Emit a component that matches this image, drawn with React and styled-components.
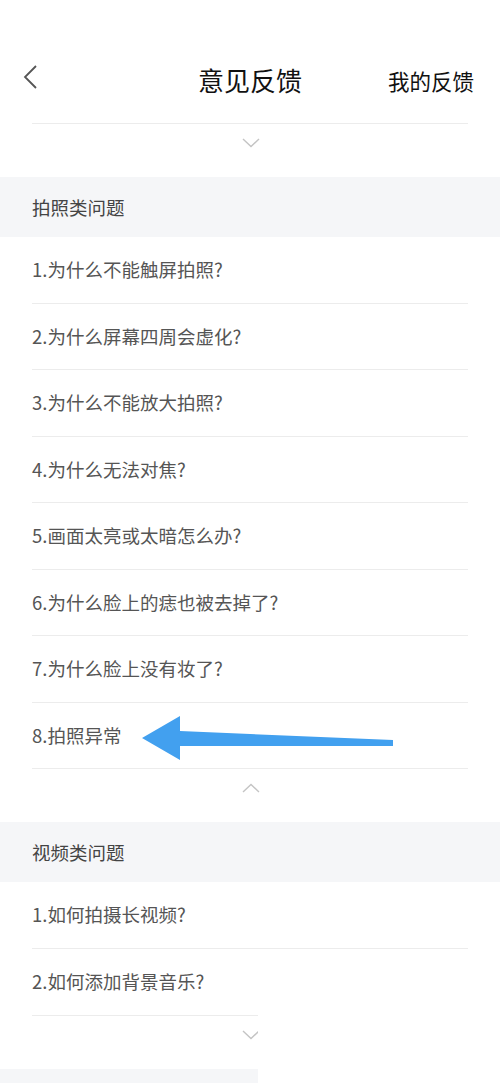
import styled, { createGlobalStyle } from 'styled-components';

const GlobalStyle = createGlobalStyle`
  html, body {
    margin: 0;
    padding: 0;
    background: #fff;
  }
  body {
    font-family: "Noto Sans CJK SC", "Noto Sans", sans-serif;
  }
`;

const photoQuestions = [
  '1.为什么不能触屏拍照?',
  '2.为什么屏幕四周会虚化?',
  '3.为什么不能放大拍照?',
  '4.为什么无法对焦?',
  '5.画面太亮或太暗怎么办?',
  '6.为什么脸上的痣也被去掉了?',
  '7.为什么脸上没有妆了?',
  '8.拍照异常',
];

const videoQuestions = ['1.如何拍摄长视频?', '2.如何添加背景音乐?'];

const Chevron = ({ up }) => (
  <svg width="18" height="10" viewBox="0 0 18 10">
    <polyline
      points={up ? '1,9 9,1.5 17,9' : '1,1 9,8.5 17,1'}
      fill="none"
      stroke="#c4c4c4"
      strokeWidth="1.4"
    />
  </svg>
);

const App = () => {
  return (
    <Page>
      <GlobalStyle />
      <Header>
        <BackBtn>
          <svg width="16" height="28" viewBox="0 0 16 28">
            <polyline points="14,2 3,13 14,24" fill="none" stroke="#555" strokeWidth="1.8" />
          </svg>
        </BackBtn>
        <Title>意见反馈</Title>
        <MyFeedback>我的反馈</MyFeedback>
      </Header>
      <Divider />
      <Toggle>
        <Chevron />
      </Toggle>

      <SectionHead>拍照类问题</SectionHead>
      {photoQuestions.map((q, i) => (
        <Row key={q}>
          {q}
          {i === photoQuestions.length - 1 && (
            <Arrow width="260" height="50" viewBox="0 0 260 50">
              <polygon
                points="0,22 38,0 38,15 251,24 251,30 38,30 38,44"
                fill="#42a0ef"
              />
            </Arrow>
          )}
        </Row>
      ))}
      <Toggle>
        <Chevron up />
      </Toggle>

      <SectionHead>视频类问题</SectionHead>
      {videoQuestions.map((q, i) => (
        <Row key={q} $last={i === videoQuestions.length - 1}>
          {q}
        </Row>
      ))}
      <Cropped>
        <Inner>
          <Divider />
          <Toggle>
            <Chevron />
          </Toggle>
          <GreyBar />
        </Inner>
      </Cropped>
    </Page>
  );
};

const Page = styled.div`
  width: 500px;
  background: #fff;
  overflow: hidden;
`;

const Header = styled.div`
  height: 123px;
  padding-top: 58px;
  box-sizing: border-box;
  display: flex;
  align-items: flex-start;
  position: relative;
`;

const BackBtn = styled.div`
  position: absolute;
  left: 22px;
  top: 64px;
`;

const Title = styled.div`
  flex: 1;
  text-align: center;
  font-size: 26px;
  color: #111;
  line-height: 44px;
`;

const MyFeedback = styled.div`
  position: absolute;
  right: 26px;
  top: 59px;
  font-size: 21.5px;
  color: #111;
  line-height: 44px;
`;

const Divider = styled.div`
  margin: 0 32px;
  height: 1px;
  background: #ececec;
`;

const Toggle = styled.div`
  height: 53px;
  display: flex;
  justify-content: center;
  padding-top: 14px;
  box-sizing: border-box;
  margin-left: 2px;
`;

const SectionHead = styled.div`
  height: 60px;
  background: #f5f6f8;
  display: flex;
  align-items: center;
  padding-left: 32px;
  font-size: 18.5px;
  color: #444;
`;

const Row = styled.div`
  position: relative;
  height: 66.5px;
  box-sizing: border-box;
  margin: 0 32px;
  border-bottom: ${(p) => (p.$last ? 'none' : '1px solid #ececec')};
  display: flex;
  align-items: center;
  font-size: 18.5px;
  color: #555;
  padding-bottom: 1px;
`;

const Arrow = styled.svg`
  position: absolute;
  left: 110px;
  top: 13px;
`;

const Cropped = styled.div`
  width: 258px;
  overflow: hidden;
`;

const Inner = styled.div`
  width: 500px;
`;

const GreyBar = styled.div`
  height: 20px;
  background: #f5f6f8;
`;

export default App;
